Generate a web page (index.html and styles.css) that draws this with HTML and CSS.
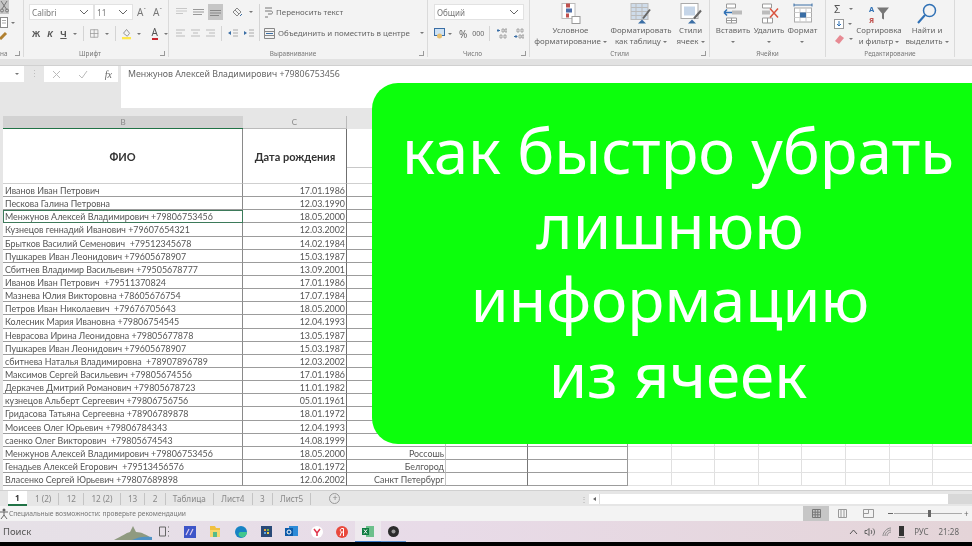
FILE: index.html
```html
<!DOCTYPE html>
<html lang="ru">
<head>
<meta charset="utf-8">
<title>Excel</title>
<link rel="stylesheet" href="styles.css">
</head>
<body>
<div class="app">
  <div class="ribbon">
    <section class="group g-clip">
      <div class="g-body clip-body">
        <span class="clip-sel"><svg width="9" height="13" viewBox="0 0 9 13"><path d="M1 1l6 9M7 1L2 9" stroke="#777" fill="none"/><circle cx="2" cy="10.500" r="1.500" fill="none" stroke="#777"/><circle cx="7" cy="10.500" r="1.500" fill="none" stroke="#777"/></svg></span>
        <span class="clip-row"><svg width="8" height="11" viewBox="0 0 8 11"><rect x=".5" y=".5" width="7" height="10" fill="#fff" stroke="#888"/><path d="M2 3.500h4M2 6h4" stroke="#aaa"/></svg><i class="caret"></i></span>
        <svg width="8" height="9" viewBox="0 0 8 9"><path d="M0 8l6-6" stroke="#b08030" stroke-width="3"/></svg>
      </div>
      <div class="g-label clip-label"><span>на</span><i class="corner"></i></div>
    </section>
    <section class="group g-font">
      <div class="g-body stack">
        <div class="tool-row">
          <div class="combo c-font"><span>Calibri</span><svg width="10" height="6" viewBox="0 0 10 6"><path d="M1 1l4 4 4-4" fill="none" stroke="#666"/></svg></div>
          <div class="combo c-size"><span>11</span><svg width="10" height="6" viewBox="0 0 10 6"><path d="M1 1l4 4 4-4" fill="none" stroke="#666"/></svg></div>
          <span class="fs-btn">A<sup>ˆ</sup></span><span class="fs-btn">A<sup>ˇ</sup></span>
        </div>
        <div class="tool-row fmt-row">
          <b class="fmt">Ж</b><b class="fmt it">К</b><b class="fmt un">Ч</b><i class="caret"></i>
          <i class="vsep"></i>
          <svg width="11" height="11" viewBox="0 0 11 11"><path d="M.5.5h10v10H.5zM5.500 0v11M0 5.500h11" fill="none" stroke="#999"/></svg><i class="caret"></i>
          <i class="vsep"></i>
          <svg width="12" height="14" viewBox="0 0 12 14"><path d="M6 1l4 5-3 4-5-4z" fill="#f4f4f4" stroke="#777"/><rect y="11" width="12" height="3" fill="#ffe84a"/></svg><i class="caret"></i>
          <span class="a-col">A</span><i class="caret"></i>
        </div>
      </div>
      <div class="g-label"><span>Шрифт</span><i class="corner"></i></div>
    </section>
    <section class="group g-align">
      <div class="g-body align-body">
        <div class="stack al-icons">
          <div class="tool-row ar1">
            <svg width="11" height="8" viewBox="0 0 11 8"><path d="M0 .5h11M0 3h11M0 5.500h7" stroke="#c8c8c8"/></svg>
            <svg width="11" height="8" viewBox="0 0 11 8"><path d="M0 1.500h11M0 4h11M0 6.500h9" stroke="#999"/></svg>
            <span class="sel"><svg width="11" height="8" viewBox="0 0 11 8"><path d="M0 2.500h11M0 5h11M0 7.500h9" stroke="#888"/></svg></span>
            <svg class="orient" width="11" height="11" viewBox="0 0 11 11"><path d="M1 5l4-4 4 4-4 4zM3 3l4 4" fill="none" stroke="#888"/><path d="M8 9l2-2" stroke="#3a6ea5"/></svg><i class="caret"></i>
          </div>
          <div class="tool-row ar2">
            <svg width="9" height="8" viewBox="0 0 9 8"><path d="M0 1h9M0 4h6M0 7h9" stroke="#bbb"/></svg>
            <svg width="9" height="8" viewBox="0 0 9 8"><path d="M0 1h9M2 4h5M0 7h9" stroke="#bbb"/></svg>
            <svg width="9" height="8" viewBox="0 0 9 8"><path d="M0 1h9M3 4h6M0 7h9" stroke="#bbb"/></svg>
            <i class="vsep"></i>
            <svg width="10" height="9" viewBox="0 0 10 9"><path d="M5 1h5M5 4h5M5 7h5" stroke="#aaa"/><path d="M0 4l3-2v4z" fill="#3a6ea5"/></svg>
            <svg width="10" height="9" viewBox="0 0 10 9"><path d="M5 1h5M5 4h5M5 7h5" stroke="#aaa"/><path d="M3 4L0 2v4z" fill="#3a6ea5"/></svg>
          </div>
        </div>
        <i class="vsep tall"></i>
        <div class="stack al-text">
          <div class="tool-row tx"><svg width="9" height="11" viewBox="0 0 9 11"><path d="M1 1h7M1 4h6c2 0 2 3 0 3H4M1 10h3" fill="none" stroke="#777"/></svg><span>Переносить текст</span></div>
          <div class="tool-row tx"><svg width="11" height="11" viewBox="0 0 11 11"><path d="M.5.5h10v10H.5zM.5 3.500h10M.5 7.500h10" fill="none" stroke="#888"/><path d="M2 5.500h7" stroke="#3a6ea5"/></svg><span>Объединить и поместить в центре</span><i class="caret c-merge"></i></div>
        </div>
      </div>
      <div class="g-label"><span>Выравнивание</span><i class="corner"></i></div>
    </section>
    <section class="group g-num">
      <div class="g-body stack">
        <div class="combo c-num"><span>Общий</span><svg width="10" height="6" viewBox="0 0 10 6"><path d="M1 1l4 4 4-4" fill="none" stroke="#666"/></svg></div>
        <div class="tool-row num-row">
          <svg width="11" height="11" viewBox="0 0 11 11"><rect x=".5" y=".5" width="10" height="7" fill="#cfe2f3" stroke="#3a6ea5"/><circle cx="5.500" cy="8" r="2.500" fill="#e8c070"/></svg><i class="caret"></i>
          <span class="pct">%</span><span class="zeros">000</span><i class="vsep"></i>
          <svg class="dec" width="10" height="11" viewBox="0 0 10 11"><path d="M0 2.500h3M1.500 1L0 2.500 1.500 4" fill="none" stroke="#3a6ea5"/><path d="M5 1h2v3H5zM8 1h2v3H8zM3 7h2v3H3zM7 7h2v3H7z" fill="none" stroke="#888" stroke-width=".7"/></svg>
          <svg class="dec" width="10" height="11" viewBox="0 0 10 11"><path d="M0 8.500h3M1.500 7L3 8.500 1.500 10" fill="none" stroke="#3a6ea5"/><path d="M3 1h2v3H3zM7 1h2v3H7zM5 7h2v3H5zM8 7h2v3H8z" fill="none" stroke="#888" stroke-width=".7"/></svg>
        </div>
      </div>
      <div class="g-label"><span>Число</span><i class="corner"></i></div>
    </section>
    <section class="group g-styles">
      <div class="g-body big-row">
        <div class="big b-cond">
          <svg width="20" height="20" viewBox="0 0 20 20"><rect x="1" y="0" width="13" height="15" fill="#fff" stroke="#bbb"/><rect x="5" y="0" width="4" height="4" fill="#c0504d"/><rect x="5" y="5" width="6" height="4" fill="#4f6fa8"/><rect x="5" y="10" width="3" height="4" fill="#c0504d"/><rect x="11" y="13" width="8" height="7" fill="#fff" stroke="#999"/></svg>
          <span>Условное<br>форматирование <i class="caret"></i></span>
        </div>
        <div class="big b-tab">
          <svg width="22" height="20" viewBox="0 0 22 20"><rect x="1" y="0" width="17" height="16" fill="#cfdcea" stroke="#bbb"/><path d="M1 4h17M1 8h17M1 12h17M6 0v16M12 0v16" stroke="#bbb"/><path d="M20 6L13 15" stroke="#666" stroke-width="2"/><path d="M8 20l4-4 4 4z" fill="#3a6ea5"/></svg>
          <span>Форматировать<br>как таблицу <i class="caret"></i></span>
        </div>
        <div class="big b-cell">
          <svg width="22" height="20" viewBox="0 0 22 20"><rect x="1" y="0" width="17" height="15" fill="#fff" stroke="#aaa"/><rect x="4" y="3" width="11" height="9" fill="#c5d5e8"/><path d="M21 7l-7 8" stroke="#666" stroke-width="2"/><path d="M8 20l4-4 4 4z" fill="#3a6ea5"/></svg>
          <span>Стили<br>ячеек <i class="caret"></i></span>
        </div>
      </div>
      <div class="g-label"><span>Стили</span><i class="corner"></i></div>
    </section>
    <section class="group g-cells">
      <div class="g-body big-row">
        <div class="big b-ins">
          <svg width="20" height="20" viewBox="0 0 20 20"><path d="M3.500.5h9v4h-9zM3.500 14.500h10v5h-10zM8.500 14.500v5M3.500 17h10" fill="#fff" stroke="#999"/><rect x="9" y="7" width="10" height="4" fill="#bbb"/><path d="M1 9h8M1 9l3-3M1 9l3 3" fill="none" stroke="#2f70b5" stroke-width="1.500"/></svg>
          <span>Вставить<br><i class="caret"></i></span>
        </div>
        <div class="big b-del">
          <svg width="20" height="20" viewBox="0 0 20 20"><path d="M3.500.5h9v4h-9zM3.500 14.500h10v5h-10zM8.500 14.500v5" fill="#fff" stroke="#999"/><rect x="3" y="7" width="8" height="4" fill="#bbb"/><path d="M11 5l8 9M19 5l-8 9" stroke="#d9543f" stroke-width="1.500"/></svg>
          <span>Удалить<br><i class="caret"></i></span>
        </div>
        <div class="big b-fmt">
          <svg width="20" height="20" viewBox="0 0 20 20"><path d="M1 1.500h18M1 0v3M19 0v3" fill="none" stroke="#3a6ea5"/><rect x="1.500" y="4.500" width="17" height="14" fill="#fff" stroke="#aaa"/><path d="M7 4.500v14M13 4.500v14M1.500 9h17M1.500 14h17" stroke="#ccc"/><rect x="7" y="9" width="6" height="5" fill="#3a6ea5"/></svg>
          <span>Формат<br><i class="caret"></i></span>
        </div>
      </div>
      <div class="g-label"><span>Ячейки</span></div>
    </section>
    <section class="group g-edit">
      <div class="g-body big-row">
        <div class="edit-col">
          <div class="edit-it"><span class="sigma">Σ</span><i class="caret"></i></div>
          <div class="edit-it"><svg width="10" height="10" viewBox="0 0 10 10"><rect x=".5" y=".5" width="9" height="9" fill="#fff" stroke="#999"/><path d="M5 2v5M3 5l2 2 2-2" fill="none" stroke="#2f70b5"/></svg><i class="caret"></i></div>
          <div class="edit-it"><svg width="11" height="10" viewBox="0 0 11 10"><path d="M1 7l5-6 4 3-5 6z" fill="#e78a93"/></svg><i class="caret"></i></div>
        </div>
        <div class="big b-sort">
          <svg width="22" height="20" viewBox="0 0 22 20"><path d="M9 4h12l-5 6v6l-2-1v-5z" fill="#777"/><text x="1" y="8" class="az az-a">А</text><text x="1" y="19" class="az az-z">Я</text></svg>
          <span>Сортировка<br>и фильтр <i class="caret"></i></span>
        </div>
        <div class="big b-find">
          <svg width="22" height="21" viewBox="0 0 22 21"><circle cx="13.500" cy="7.500" r="6" fill="none" stroke="#2f70b5" stroke-width="1.500"/><path d="M9 12l-7 8" stroke="#2f70b5" stroke-width="2"/></svg>
          <span>Найти и<br>выделить <i class="caret"></i></span>
        </div>
      </div>
      <div class="g-label"><span>Редактирование</span></div>
    </section>
  </div>
  <div class="rib-strip"></div>
  <div class="fbar">
    <div class="namebox"><i class="caret"></i></div>
    <div class="fdots">⋮</div>
    <div class="fbtns">
      <svg width="9" height="9" viewBox="0 0 9 9"><path d="M1 1l7 7M8 1L1 8" stroke="#bbb"/></svg>
      <svg width="10" height="9" viewBox="0 0 10 9"><path d="M1 5l3 3 5-7" fill="none" stroke="#bbb"/></svg>
      <span class="fx">fx</span>
    </div>
    <div class="finput">Менжунов Алексей Владимирович +79806753456</div>
  </div>
  <div class="fgap"></div>
  <div class="sheet">
    <div class="heads">
      <div class="hd hb">B</div><div class="hd hc">C</div><div class="hd hrest"></div>
    </div>
    <div class="row row-head">
      <div class="c b center bold">ФИО</div>
      <div class="c d-c center bold">Дата рождения</div>
      <div class="c city head-city"></div>
      <div class="c e"></div><div class="c f"></div><div class="c rest"></div>
    </div>
    <div class="row"><div class="c b">Иванов Иван Петрович</div><div class="c d-c">17.01.1986</div><div class="c city"></div><div class="c e"></div><div class="c f"></div><div class="c rest"></div></div>
    <div class="row"><div class="c b">Пескова Галина Петровна</div><div class="c d-c">12.03.1990</div><div class="c city"></div><div class="c e"></div><div class="c f"></div><div class="c rest"></div></div>
    <div class="row"><div class="c b active">Менжунов Алексей Владимирович +79806753456</div><div class="c d-c">18.05.2000</div><div class="c city"></div><div class="c e"></div><div class="c f"></div><div class="c rest"></div></div>
    <div class="row"><div class="c b">Кузнецов геннадий Иванович +79607654321</div><div class="c d-c">12.03.2002</div><div class="c city"></div><div class="c e"></div><div class="c f"></div><div class="c rest"></div></div>
    <div class="row"><div class="c b">Брытков Василий Семенович&nbsp; +79512345678</div><div class="c d-c">14.02.1984</div><div class="c city"></div><div class="c e"></div><div class="c f"></div><div class="c rest"></div></div>
    <div class="row"><div class="c b">Пушкарев Иван Леонидович +79605678907</div><div class="c d-c">15.03.1987</div><div class="c city"></div><div class="c e"></div><div class="c f"></div><div class="c rest"></div></div>
    <div class="row"><div class="c b">Сбитнев Владимир Васильевич +79505678777</div><div class="c d-c">13.09.2001</div><div class="c city"></div><div class="c e"></div><div class="c f"></div><div class="c rest"></div></div>
    <div class="row"><div class="c b">Иванов Иван Петрович&nbsp; +79511370824</div><div class="c d-c">17.01.1986</div><div class="c city"></div><div class="c e"></div><div class="c f"></div><div class="c rest"></div></div>
    <div class="row"><div class="c b">Мазнева Юлия Викторовна +78605676754</div><div class="c d-c">17.07.1984</div><div class="c city"></div><div class="c e"></div><div class="c f"></div><div class="c rest"></div></div>
    <div class="row"><div class="c b">Петров Иван Николаевич&nbsp; +79676705643</div><div class="c d-c">18.05.2000</div><div class="c city"></div><div class="c e"></div><div class="c f"></div><div class="c rest"></div></div>
    <div class="row"><div class="c b">Колесник Мария Ивановна +79806754545</div><div class="c d-c">12.04.1993</div><div class="c city"></div><div class="c e"></div><div class="c f"></div><div class="c rest"></div></div>
    <div class="row"><div class="c b">Неврасова Ирина Леонидовна +79805677878</div><div class="c d-c">13.05.1987</div><div class="c city"></div><div class="c e"></div><div class="c f"></div><div class="c rest"></div></div>
    <div class="row"><div class="c b">Пушкарев Иван Леонидович +79605678907</div><div class="c d-c">15.03.1987</div><div class="c city"></div><div class="c e"></div><div class="c f"></div><div class="c rest"></div></div>
    <div class="row"><div class="c b">сбитнева Наталья Владимировна&nbsp; +78907896789</div><div class="c d-c">12.03.2002</div><div class="c city"></div><div class="c e"></div><div class="c f"></div><div class="c rest"></div></div>
    <div class="row"><div class="c b">Максимов Сергей Васильевич +79805674556</div><div class="c d-c">17.01.1986</div><div class="c city"></div><div class="c e"></div><div class="c f"></div><div class="c rest"></div></div>
    <div class="row"><div class="c b">Деркачев Дмитрий Романович +79805678723</div><div class="c d-c">11.01.1982</div><div class="c city"></div><div class="c e"></div><div class="c f"></div><div class="c rest"></div></div>
    <div class="row"><div class="c b">кузнецов Альберт Сергеевич +79806756756</div><div class="c d-c">05.01.1961</div><div class="c city"></div><div class="c e"></div><div class="c f"></div><div class="c rest"></div></div>
    <div class="row"><div class="c b">Гридасова Татьяна Сергеевна +78906789878</div><div class="c d-c">18.01.1972</div><div class="c city"></div><div class="c e"></div><div class="c f"></div><div class="c rest"></div></div>
    <div class="row"><div class="c b">Моисеев Олег Юрьевич +79806784343</div><div class="c d-c">12.04.1993</div><div class="c city"></div><div class="c e"></div><div class="c f"></div><div class="c rest"></div></div>
    <div class="row"><div class="c b">саенко Олег Викторович&nbsp; +79805674543</div><div class="c d-c">14.08.1999</div><div class="c city"></div><div class="c e"></div><div class="c f"></div><div class="c rest"></div></div>
    <div class="row"><div class="c b">Менжунов Алексей Владимирович +79806753456</div><div class="c d-c">18.05.2000</div><div class="c city">Россошь</div><div class="c e"></div><div class="c f"></div><div class="c rest"></div></div>
    <div class="row"><div class="c b">Генадьев Алексей Егорович&nbsp; +79513456576</div><div class="c d-c">18.01.1972</div><div class="c city">Белгород</div><div class="c e"></div><div class="c f"></div><div class="c rest"></div></div>
    <div class="row"><div class="c b">Власенко Сергей Юрьевич +79807689898</div><div class="c d-c">12.06.2002</div><div class="c city">Санкт Петербург</div><div class="c e"></div><div class="c f"></div><div class="c rest"></div></div>
  </div>
  <div class="tabs">
    <div class="tab-list">
      <span class="tab on">1</span><span class="tab">1 (2)</span><span class="tab">12</span><span class="tab">12 (2)</span><span class="tab">13</span><span class="tab">2</span><span class="tab">Таблица</span><span class="tab">Лист4</span><span class="tab">3</span><span class="tab">Лист5</span>
    </div>
    <span class="addtab">+</span>
    <div class="hscroll"><span class="tdots">⋮</span><span class="sc-left"></span><span class="sc-track"></span></div>
  </div>
  <div class="status">
    <svg class="acc" width="9" height="11" viewBox="0 0 9 11"><circle cx="4" cy="2" r="1.500" fill="#666"/><path d="M0 4h8M4 4v3M4 7l-3 4M4 7l3 4" stroke="#666" fill="none"/></svg>
    <span class="st-text">Специальные возможности: проверьте рекомендации</span>
    <div class="views">
      <span class="v on"><svg width="9" height="9" viewBox="0 0 9 9"><path d="M.5.5h8v8h-8zM.5 3.200h8M.5 5.800h8M3.200.5v8M5.800.5v8" fill="none" stroke="#777"/></svg></span>
      <span class="v"><svg width="9" height="9" viewBox="0 0 9 9"><path d="M.5.5h8v8h-8zM3 .5v8M6 .5v8" fill="none" stroke="#999"/></svg></span>
      <span class="v"><svg width="11" height="9" viewBox="0 0 11 9"><path d="M.5.5h10v8H.5zM5.500.5v4h-5" fill="none" stroke="#999"/></svg></span>
    </div>
    <div class="zoom"><i class="zm"></i><span class="zline"><i class="zthumb"></i></span><span class="zp">+</span></div>
  </div>
  <div class="taskbar">
    <div class="search">Поиск</div>
    <svg class="thumb" width="38" height="21" viewBox="0 0 38 21"><path d="M0 19c8-4 12-7 16-8l3-6 3 6c6 0 10 3 16 6v2z" fill="#8f9a80"/><path d="M18 19c6-3 12-4 20-3v3z" fill="#4f92c5"/></svg>
    <div class="tb-icons">
      <span class="ti"><svg width="11" height="11" viewBox="0 0 11 11"><path d="M.5 1h6v9h-6zM9 1h1M9 5.500h1M9 10h1" fill="none" stroke="#666"/></svg></span>
      <span class="ti"><svg width="12" height="12" viewBox="0 0 12 12"><rect width="12" height="12" fill="#3e55c8"/><path d="M2 9l3-6M6 9l3-6" stroke="#dce" stroke-width="1.200"/></svg></span>
      <span class="ti"><svg width="12" height="11" viewBox="0 0 12 11"><path d="M1 0h5l1 2h4v2H1z" fill="#f0c040"/><rect x="1" y="4" width="10" height="7" fill="#f5d76e"/><rect x="4" y="6" width="4" height="5" fill="#5b8"/></svg></span>
      <span class="ti"><svg width="12" height="12" viewBox="0 0 12 12"><circle cx="6" cy="6" r="6" fill="#1783c4"/><path d="M5 6h7c0 4-4 6-6 5C3 10 3 7 5 6z" fill="#42c78d"/></svg></span>
      <span class="ti"><svg width="11" height="11" viewBox="0 0 11 11"><rect width="11" height="11" fill="#2a4a78"/><rect x="3" y="3" width="2" height="2" fill="#e8a33d"/><rect x="6" y="3" width="2" height="2" fill="#74b84a"/><rect x="3" y="6" width="2" height="2" fill="#5aa7e0"/><rect x="6" y="6" width="2" height="2" fill="#f0d040"/></svg></span>
      <span class="ti"><svg width="13" height="11" viewBox="0 0 13 11"><rect x="4" width="9" height="10" fill="#2e8bd8"/><rect y="2" width="8" height="8" fill="#0d5aa8"/><circle cx="4" cy="6" r="2" fill="none" stroke="#fff"/></svg></span>
      <span class="ti"><svg width="12" height="12" viewBox="0 0 12 12"><circle cx="6" cy="6" r="6" fill="#fff"/><path d="M3 3l3 4 3-4M6 7v3" fill="none" stroke="#e0334a" stroke-width="1.500"/></svg></span>
      <span class="ti"><svg width="12" height="12" viewBox="0 0 12 12"><circle cx="6" cy="6" r="6" fill="#e9483c"/><path d="M7.500 10V2.500H6C3.500 2.500 4 6 6 6h1.500M5.500 6L4 10" fill="none" stroke="#fff"/></svg></span>
      <span class="ti ti-on"><svg width="12" height="11" viewBox="0 0 12 11"><rect x="4" width="8" height="11" fill="#6cc08b"/><rect y="2" width="7" height="7" fill="#107c41"/><path d="M2 3.500l3 4M5 3.500l-3 4" stroke="#fff"/></svg></span>
      <span class="ti ti-run"><svg width="11" height="11" viewBox="0 0 11 11"><circle cx="5.500" cy="5.500" r="5.500" fill="#2b2b2b"/><circle cx="5.500" cy="5.500" r="2" fill="#999"/></svg></span>
    </div>
    <div class="tray">
      <svg width="9" height="6" viewBox="0 0 9 6"><path d="M1 5l3.500-4L8 5" fill="none" stroke="#555"/></svg>
      <svg width="12" height="10" viewBox="0 0 12 10"><path d="M1 3.500h2l2-2v7l-2-2H1zM7 3c1 1 1 3 0 4M9 1.500c2 2 2 5 0 7" fill="none" stroke="#666"/></svg>
      <svg width="10" height="10" viewBox="0 0 10 10"><path d="M1 9c0-4 4-8 8-8M3 9c0-3 3-6 6-6M5 9c0-2 2-4 4-4" fill="none" stroke="#888"/></svg>
      <svg width="7" height="12" viewBox="0 0 7 12"><rect x="1" width="5" height="10" fill="#333"/><rect y="11" width="7" height="1" fill="#888"/></svg>
      <span class="lang">РУС</span>
      <span class="clock">21:28</span>
    </div>
  </div>
  <div class="blackbar"></div>
  <aside class="banner">
    <p><span class="ln">как быстро убрать</span><span class="ln ln-in">лишнюю</span><span class="ln ln-in ln-tight">информацию</span><span class="ln">из ячеек</span></p>
  </aside>
</div>
</body>
</html>
```
FILE: styles.css
```css
* { box-sizing: border-box; }
html, body { margin: 0; padding: 0; }
body { width: 972px; height: 546px; overflow: hidden; background: #e6e6e6; font-family: "Noto Sans", "Open Sans", sans-serif; color: #555; }
.app { position: relative; width: 972px; height: 546px; overflow: hidden; display: flex; flex-direction: column; }

i { display: block; font-style: normal; }
.caret { width: 0; height: 0; border-left: 2px solid transparent; border-right: 2px solid transparent; border-top: 2px solid #777; display: inline-block; vertical-align: middle; flex: none; }
.vsep { width: 1px; height: 15px; background: #d4d4d4; flex: none; }
.vsep.tall { height: 37px; }

/* ribbon */
.ribbon { height: 59px; background: #f3f3f3; display: flex; flex: none; font-size: 7.900px; filter: blur(.35px); }
.group { display: flex; flex-direction: column; border-right: 1px solid #dadada; height: 57px; flex: none; }
.g-body { height: 48px; flex: none; }
.g-label { height: 9px; position: relative; font-size: 6.400px; line-height: 11px; text-align: center; color: #777; white-space: nowrap; }
.corner { position: absolute; right: 3px; top: 3px; width: 5px; height: 5px; border-right: 1px solid #999; border-bottom: 1px solid #999; }
.stack { display: flex; flex-direction: column; }
.tool-row { display: flex; align-items: center; }

.g-clip { width: 24px; }
.clip-body { display: flex; flex-direction: column; gap: 3px; align-items: flex-start; }
.clip-sel { width: 9px; height: 14px; background: #c6c6c6; display: block; }
.clip-row { display: flex; align-items: center; gap: 3px; }
.clip-label { text-align: left; }
.g-font { width: 145px; }
.g-font .stack { padding: 4px 0 0 5px; gap: 5px; }
.g-font .g-label { padding-right: 12px; }
.combo { background: #fff; border: 1px solid #e2e2e2; height: 16px; display: flex; align-items: center; justify-content: space-between; padding: 0 4px 0 2px; font-size: 8.200px; color: #777; flex: none; }
.c-font { width: 65px; }
.c-size { width: 39px; }
.fs-btn { font-size: 10px; width: 15px; text-align: center; color: #777; line-height: 12px; margin-left: 1px; }
.fs-btn sup { font-size: 6px; line-height: 0; }
.fmt-row { gap: 6px; padding-left: 3px; height: 17px; }
.fmt { font: bold 9px "Liberation Sans", sans-serif; color: #555; width: 10px; text-align: center; }
.fmt.it { font-style: italic; }
.fmt.un { text-decoration: underline; }
.a-col { font-size: 10px; line-height: 11px; border-bottom: 2px solid #c9262f; color: #555; margin-left: 5px; }

.g-align { width: 259px; }
.g-align .g-label { padding-right: 10px; }
.align-body { display: flex; align-items: flex-start; padding: 4px 0 0 7px; gap: 4px; }
.al-icons { width: 79px; gap: 5px; }
.ar1 { gap: 6px; height: 16px; }
.ar2 { gap: 6px; height: 16px; }
.sel { width: 15px; height: 16px; background: #c6c6c6; display: flex; align-items: center; justify-content: center; margin-left: -2px; }
.orient { margin-left: 3px; }
.al-text { gap: 7px; color: #666; padding-top: 1px; white-space: nowrap; }
.tx { gap: 3px; height: 14px; }
.c-merge { margin-left: 7px; }

.g-num { width: 102px; }
.g-num .stack { padding: 4px 0 0 6px; gap: 6px; }
.g-num .g-label { padding-right: 12px; }
.c-num { width: 90px; font-size: 8px; }
.num-row { gap: 3px; font-size: 9px; color: #666; height: 15px; }
.pct { margin-left: 4px; font-size: 10px; }
.zeros { font-size: 7px; margin-left: 2px; margin-right: 2px; }
.dec { margin-left: 4px; flex: none; }

.big-row { display: flex; padding-top: 3px; }
.big { display: flex; flex-direction: column; align-items: center; text-align: center; line-height: 11px; color: #666; flex: none; white-space: nowrap; }
.big svg { height: 21px; margin-bottom: 1px; flex: none; }
.g-styles { width: 180px; }
.g-styles .big-row { padding-left: 3px; }
.b-cond { width: 75px; }
.b-tab { width: 66px; }
.b-cell { width: 33px; }
.g-cells { width: 116px; }
.g-cells .big-row { padding-left: 5px; }
.b-ins { width: 36px; }
.b-del { width: 36px; }
.b-fmt { width: 31px; }
.g-edit { width: 129px; }
.g-edit .big-row { padding-left: 8px; }
.edit-col { width: 21px; display: flex; flex-direction: column; gap: 3px; }
.edit-it { height: 12px; display: flex; align-items: center; gap: 4px; }
.sigma { font-size: 11px; line-height: 12px; color: #555; width: 11px; }
.b-sort { width: 50px; margin-left: -1px; }
.b-find { width: 46px; }
.az { font: bold 7.500px "Noto Sans", sans-serif; }
.az-a { fill: #2f70b5; }
.az-z { fill: #c0504d; }

.rib-strip { height: 7px; background: #e2e2e2; border-bottom: 1px solid #d0d0d0; flex: none; }

/* formula bar */
.fbar { height: 43px; background: #e6e6e6; display: flex; align-items: flex-start; flex: none; filter: blur(.35px); }
.namebox { width: 24px; height: 16px; background: #fff; display: flex; align-items: center; justify-content: flex-end; padding-right: 5px; }
.fdots { width: 20px; text-align: center; font-size: 9px; line-height: 16px; color: #bbb; }
.fbtns { width: 74px; height: 16px; background: #fff; display: flex; align-items: center; justify-content: space-between; padding: 0 6px 0 8px; }
.fx { font: italic 10px "Liberation Serif", serif; color: #666; }
.finput { margin-left: 3px; flex: 1; height: 42px; background: #fff; padding: 1px 0 0 7px; font-size: 8.800px; line-height: 14px; color: #666; }
.fgap { height: 7px; flex: none; }

/* sheet */
.sheet { height: 374px; padding-left: 3px; background: #fff; flex: none; overflow: hidden; font-family: "Lato", "Noto Sans", sans-serif; position: relative; filter: blur(.3px); box-shadow: inset 3px 0 0 #e6e6e6; }
.heads { display: flex; height: 13px; font-size: 8px; color: #888; background: #e6e6e6; }
.hd { text-align: center; line-height: 12px; }
.hb { width: 240px; background: #d2d2d2; border-bottom: 1px solid #217346; }
.hc { width: 104px; border-right: 1px solid #bbb; border-bottom: 1px solid #bbb; }
.hrest { flex: 1; }
.row { display: flex; height: 13.150px; font-size: 8.900px; line-height: 12px; color: #555; }
.row-head { height: 55px; }
.c { height: 100%; border-bottom: 1px solid #9c9c9c; white-space: nowrap; overflow: hidden; padding: 1px 2px 0; flex: none; }
.b { width: 240px; border-right: 1px solid #8a8a8a; }
.d-c { width: 104px; text-align: right; border-right: 1px solid #6f6f6f; padding-right: 1px; }
.city { width: 99px; text-align: right; border-right: 1px solid #c4c4c4; padding-right: 1px; }
.e { width: 82px; border-right: 1px solid #777; }
.f { width: 100px; border-right: 1px solid #999; }
.rest { width: 350px; padding: 0; border-bottom: 1px solid #e2e2e2; background: repeating-linear-gradient(90deg, transparent 0 42.600px, #e0e0e0 42.600px 43.600px); }
.center { display: flex; align-items: center; justify-content: center; text-align: center; }
.bold { font-weight: 700; font-size: 11px; color: #333; }
.row-head .b, .row-head .d-c { border-bottom-color: #cfcfcf; }
.head-city { background: linear-gradient(#fff 38px, #c8c8c8 38px 39px, #fff 39px); border-bottom-color: #cfcfcf; }
.active { border: 1px solid #3d7a5a; padding: 0 2px 0 1px; }

/* tabs */
.tabs { height: 16px; background: #e6e6e6; display: flex; align-items: center; flex: none; border-top: 1px solid #d0d0d0; font-size: 8.200px; color: #888; filter: blur(.3px); }
.tab-list { display: flex; padding-left: 8px; align-items: center; height: 15px; }
.tab { padding: 0 7.200px; border-right: 1px solid #c4c4c4; line-height: 12px; }
.tab.on { background: #fff; color: #333; font-weight: 700; height: 15px; line-height: 13px; border-right: 0; border-bottom: 2px solid #217346; padding: 0 7px; margin-right: 1px; }
.addtab { width: 11px; height: 11px; border: 1px solid #999; border-radius: 50%; text-align: center; line-height: 8px; font-size: 9px; color: #888; margin-left: 18px; }
.hscroll { margin-left: auto; width: 392px; display: flex; height: 15px; align-items: center; flex: none; background: linear-gradient(90deg, transparent 368px, #d8d8d8 368px) center / 100% 10px no-repeat; }
.tdots { width: 9px; font-size: 8px; color: #aaa; flex: none; }
.sc-left { width: 11px; height: 10px; background: #fff; border-right: 1px solid #ddd; position: relative; flex: none; }
.sc-left::after { content: ""; position: absolute; left: 4px; top: 3px; border-right: 3px solid #666; border-top: 2px solid transparent; border-bottom: 2px solid transparent; }
.sc-track { width: 348px; height: 10px; background: #fff; flex: none; }

/* status */
.status { height: 15px; background: #f3f3f3; display: flex; align-items: center; flex: none; font-size: 6.700px; color: #777; filter: blur(.3px); }
.acc { flex: none; }
.st-text { white-space: nowrap; }
.views { display: flex; margin-left: auto; height: 15px; }
.v { width: 26px; display: flex; align-items: center; justify-content: center; }
.v.on { background: #c6c6c6; }
.zoom { display: flex; align-items: center; width: 88px; padding-left: 4px; margin-left: 3px; color: #666; }
.zm { width: 5px; height: 1px; background: #666; }
.zline { width: 68px; height: 1px; background: #aaa; position: relative; margin-left: 1px; }
.zthumb { position: absolute; left: 34px; top: -3px; width: 3px; height: 7px; background: #666; }
.zp { font-size: 8px; margin-left: 2px; line-height: 8px; }

/* taskbar */
.taskbar { height: 21px; background: linear-gradient(90deg, #e6e1e7 0%, #e8dbe8 45%, #e4d4d8 100%); display: flex; align-items: center; flex: none; filter: blur(.3px); }
.search { width: 114px; padding-left: 3px; font-size: 9.500px; color: #555; flex: none; }
.thumb { flex: none; display: block; }
.tb-icons { display: flex; }
.ti { width: 25.400px; height: 21px; display: flex; align-items: center; justify-content: center; flex: none; }
.ti-on { background: #eee9ee; border-bottom: 1px solid #3a78c8; }
.ti-run { border-bottom: 1px solid #5a8fd0; }
.tray { margin-left: auto; display: flex; align-items: center; gap: 6px; padding-right: 13px; font-size: 8px; color: #666; }
.lang { margin-left: 3px; }
.clock { margin-left: 4px; }
.blackbar { flex: 1; background: #000; }

/* overlay banner */
.banner { position: absolute; left: 372px; top: 83px; width: 640px; height: 361px; background: #0cff0c; border-radius: 26px; color: #fff; }
.banner p { margin: 0; width: 612px; padding-top: 30px; text-align: center; font-family: "Noto Sans", sans-serif; font-size: 62px; line-height: 74.500px; white-space: nowrap; }
.ln { display: block; }
.ln-in { padding-right: 16px; }
.ln-tight { font-size: 61px; }
```
